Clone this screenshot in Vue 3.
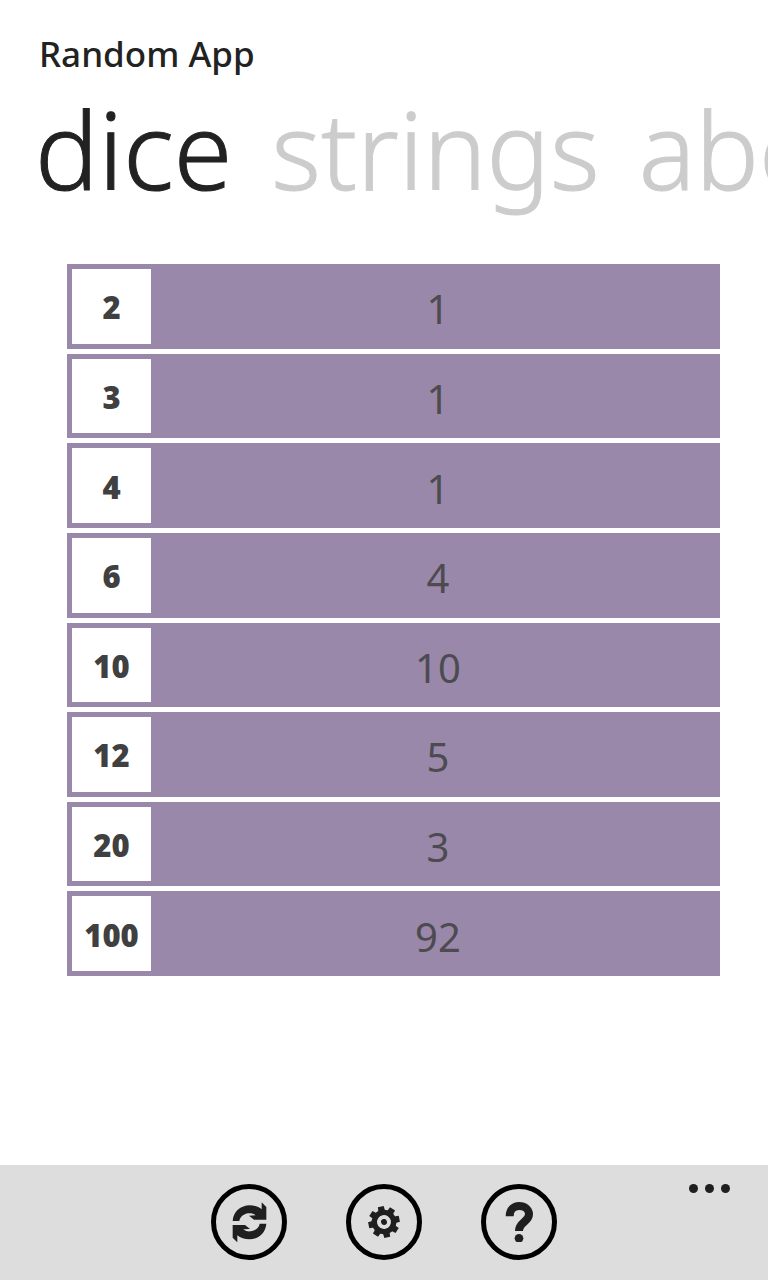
<script setup>
import { ref } from 'vue'

const tabs = ['dice', 'strings', 'about']
const active = ref('dice')

const dice = [
  { sides: 2, value: 1 },
  { sides: 3, value: 1 },
  { sides: 4, value: 1 },
  { sides: 6, value: 4 },
  { sides: 10, value: 10 },
  { sides: 12, value: 5 },
  { sides: 20, value: 3 },
  { sides: 100, value: 92 },
]

const teeth = [0, 45, 90, 135, 180, 225, 270, 315]
</script>

<template>
  <div class="page">
    <header class="header">
      <h1 class="title">Random App</h1>
      <nav class="tabs">
        <button
          v-for="tab in tabs"
          :key="tab"
          type="button"
          class="tab"
          :class="{ active: tab === active }"
          @click="active = tab"
        >{{ tab }}</button>
      </nav>
    </header>

    <main class="content">
      <table class="dice">
        <tbody>
          <tr v-for="die in dice" :key="die.sides">
            <th scope="row">{{ die.sides }}</th>
            <td>{{ die.value }}</td>
          </tr>
        </tbody>
      </table>
    </main>

    <footer class="bar">
      <button type="button" class="round" aria-label="Roll again">
        <svg viewBox="0 0 120 120" aria-hidden="true">
          <g fill="#1f1f1f">
            <path d="M11 57C13 29 35 10 62 10C76 10 89 14 98 22V1L112 15V53H75L60 41L80 40C73 34 65 33 58 34C43 36 33 45 31 57Z" />
            <path transform="rotate(180 61.5 61)" d="M11 57C13 29 35 10 62 10C76 10 89 14 98 22V1L112 15V53H75L60 41L80 40C73 34 65 33 58 34C43 36 33 45 31 57Z" />
          </g>
        </svg>
      </button>
      <button type="button" class="round" aria-label="Settings">
        <svg viewBox="0 0 120 120" aria-hidden="true">
          <g transform="translate(60 60) rotate(-12)">
            <circle r="29" fill="none" stroke="#1f1f1f" stroke-width="16" />
            <path
              v-for="angle in teeth"
              :key="angle"
              :transform="`rotate(${angle})`"
              d="M-10 -34L-9 -47H9L10 -34Z"
              fill="#1f1f1f"
            />
            <circle r="9" fill="#1f1f1f" />
          </g>
        </svg>
      </button>
      <button type="button" class="round" aria-label="Help">
        <svg viewBox="0 0 120 120" aria-hidden="true">
          <path d="M32 43C32 23 45 12 60 12C77 12 90 22 90 37C90 60 60 60 60 87" fill="none" stroke="#1f1f1f" stroke-width="24" />
          <circle cx="60" cy="109" r="13" fill="#1f1f1f" />
        </svg>
      </button>
      <button type="button" class="more" aria-label="More">
        <span></span><span></span><span></span>
      </button>
    </footer>
  </div>
</template>

<style>
body {
  margin: 0;
  background: #fff;
}
</style>

<style scoped>
.page {
  display: flex;
  flex-direction: column;
  min-height: 100vh;
  overflow: hidden;
  background: #fff;
  color: #222;
  font-family: "Noto Sans", "Open Sans", sans-serif;
}
button {
  margin: 0;
  padding: 0;
  border: 0;
  background: none;
  color: inherit;
  font: inherit;
  cursor: pointer;
}
.header {
  padding: 30px 0 0 35px;
}
.title {
  margin: 0;
  padding-left: 4px;
  font-size: 35px;
  line-height: 48px;
  font-weight: 500;
}
.tabs {
  display: flex;
  gap: 39px;
  white-space: nowrap;
}
.tab {
  flex: none;
  font-size: 106px;
  line-height: 142px;
  font-weight: 300;
  color: #ccc;
  -webkit-text-stroke: 1px currentColor;
}
.tab.active {
  color: #222;
}
.content {
  flex: 1;
  padding: 39px 48px 40px 67px;
}
.dice {
  width: 100%;
  height: 722px;
  border-spacing: 0 5px;
}
.dice tr {
  background: #9988a9;
}
.dice th {
  box-sizing: border-box;
  width: 89px;
  padding: 2px 0 0;
  border: 5px solid #9988a9;
  background: #fff;
  color: #404040;
  font-size: 31px;
  line-height: 40px;
  font-weight: 900;
}
.dice td {
  padding: 6px 0 0;
  text-align: center;
  color: #4d4b50;
  font-size: 40px;
  line-height: 52px;
  font-weight: 400;
}
.bar {
  position: relative;
  display: flex;
  justify-content: center;
  gap: 59px;
  padding: 19px 0 20px;
  background: #ddd;
}
.round {
  display: flex;
  align-items: center;
  justify-content: center;
  box-sizing: border-box;
  width: 76px;
  height: 76px;
  border: 5px solid #000;
  border-radius: 50%;
}
.round svg {
  width: 40px;
  height: 40px;
}
.more {
  position: absolute;
  top: 19px;
  right: 38px;
  display: flex;
  gap: 7px;
}
.more span {
  width: 9px;
  height: 9px;
  border-radius: 50%;
  background: #1f1f1f;
}
</style>
